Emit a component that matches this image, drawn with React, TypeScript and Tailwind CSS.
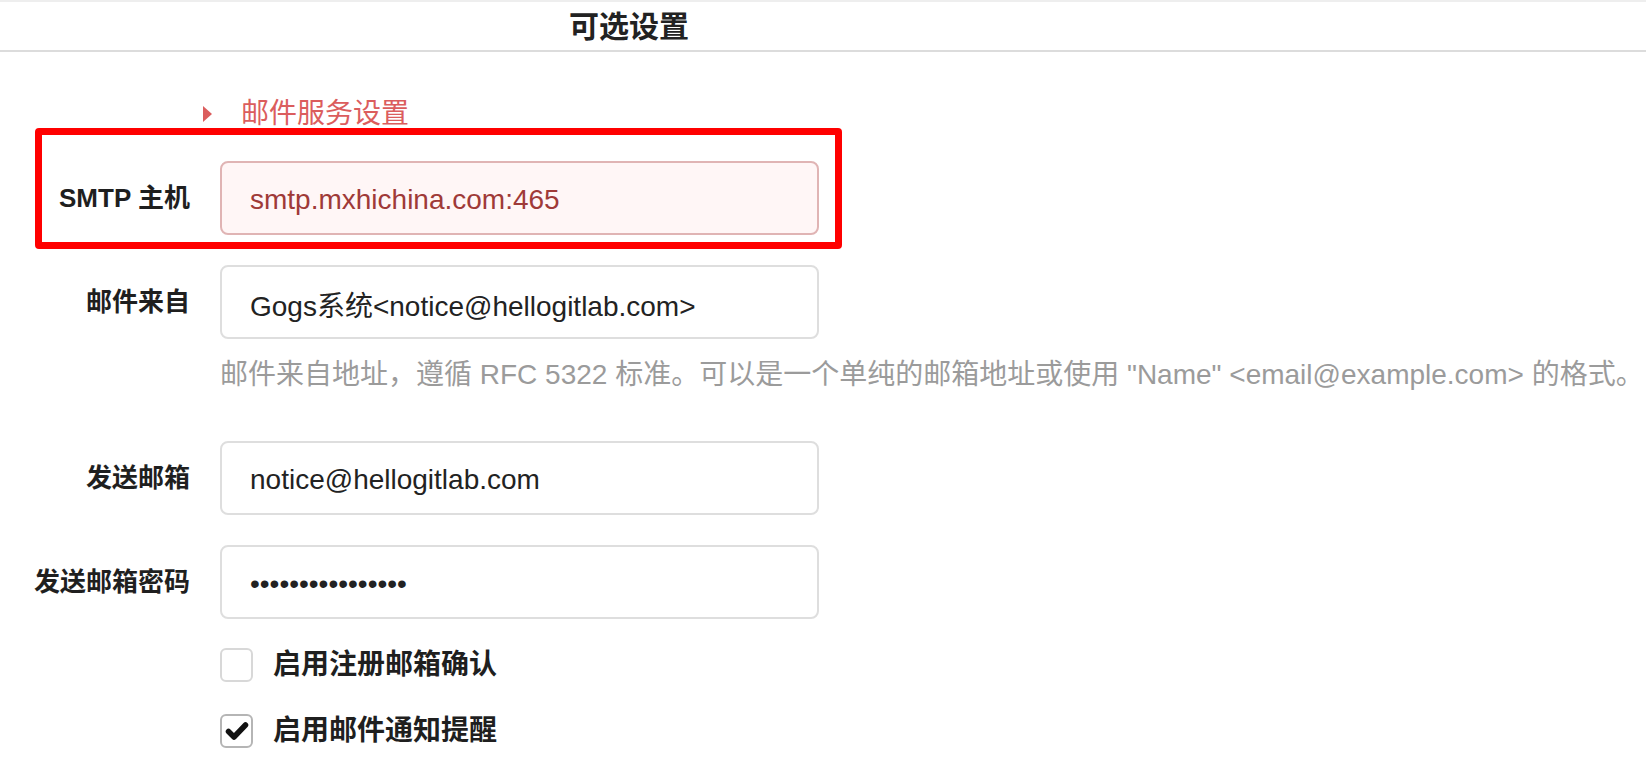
import React from 'react';

const font = { fontFamily: '"Liberation Sans", "Noto Sans CJK SC", sans-serif' };

interface FieldProps {
  label: string;
  value: string;
  type?: string;
  error?: boolean;
}

const Field: React.FC<FieldProps> = ({ label, value, type = 'text', error = false }) => {
  const inputClasses = error
    ? 'bg-[#fff6f6] border-[#e0b4b4] text-[#9f3a38]'
    : 'bg-white border-[#dedede] text-[#222222]';

  return (
    <div className="flex items-center h-[74px]">
      <label className="w-[190px] shrink-0 text-right text-[26px] font-bold text-[#1f1f1f] whitespace-nowrap">
        {label}
      </label>
      <input
        readOnly
        type={type}
        value={value}
        style={font}
        className={`ml-[30px] w-[599px] h-[74px] px-[28px] pt-[3px] text-[28px] border-2 rounded-[8px] outline-none ${inputClasses}`}
      />
    </div>
  );
};

const Checkbox: React.FC<{ label: string; checked?: boolean }> = ({ label, checked = false }) => (
  <div className="flex items-center h-[34px] ml-[220px]">
    <div
      className={`w-[33px] h-[34px] rounded-[6px] border-2 bg-white flex items-center justify-center ${
        checked ? 'border-[#b5b5b5]' : 'border-[#d8d8d8]'
      }`}
    >
      {checked && (
        <svg width="24" height="20" viewBox="0 0 24 20">
          <path d="M3.5 10.5 L9 16 L20.5 4" fill="none" stroke="#111" strokeWidth="5.5" strokeLinecap="round" strokeLinejoin="round" />
        </svg>
      )}
    </div>
    <span className="ml-[20px] text-[28px] font-bold text-[#1f1f1f] leading-[34px] whitespace-nowrap">{label}</span>
  </div>
);

export default function App() {
  return (
    <div className="w-[1646px] min-h-[762px] bg-white overflow-hidden" style={font}>
      <div className="h-[2px] bg-[#eeeeee]" />
      <div className="h-[48px] box-content border-b-2 border-[#dcdcdc] flex items-center">
        <div className="w-[1258px] flex justify-center pt-[2px]">
          <h4 className="text-[30px] font-bold text-[#222222] leading-none">可选设置</h4>
        </div>
      </div>

      <div className="mt-[45px] h-[34px] flex items-center">
        <svg className="ml-[203px]" width="9" height="16" viewBox="0 0 9 16">
          <path d="M0 0 L9 8 L0 16 Z" fill="#db5d5d" />
        </svg>
        <span className="ml-[29px] text-[28px] text-[#db5d5d] leading-[34px]">邮件服务设置</span>
      </div>

      {/* first field carries the red annotation frame */}
      <div className="relative mt-[30px]">
        <Field label="SMTP 主机" value="smtp.mxhichina.com:465" error />
        <div className="absolute left-[35px] top-[-33px] w-[807px] h-[121px] border-[7px] border-[#ff0000] rounded-[4px] pointer-events-none" />
      </div>

      <div className="mt-[30px]">
        <Field label="邮件来自" value="Gogs系统<notice@hellogitlab.com>" />
      </div>
      <p className="mt-[18px] ml-[220px] text-[28px] leading-[36px] text-[#9b9b9b] whitespace-nowrap">
        邮件来自地址，遵循 RFC 5322 标准。可以是一个单纯的邮箱地址或使用 "Name" &lt;email@example.com&gt; 的格式。
      </p>

      <div className="mt-[48px]">
        <Field label="发送邮箱" value="notice@hellogitlab.com" />
      </div>
      <div className="mt-[30px]">
        <Field label="发送邮箱密码" type="password" value="aaaaaaaaaaaaaaaa" />
      </div>

      <div className="mt-[29px]">
        <Checkbox label="启用注册邮箱确认" />
      </div>
      <div className="mt-[32px]">
        <Checkbox label="启用邮件通知提醒" checked />
      </div>
    </div>
  );
}
